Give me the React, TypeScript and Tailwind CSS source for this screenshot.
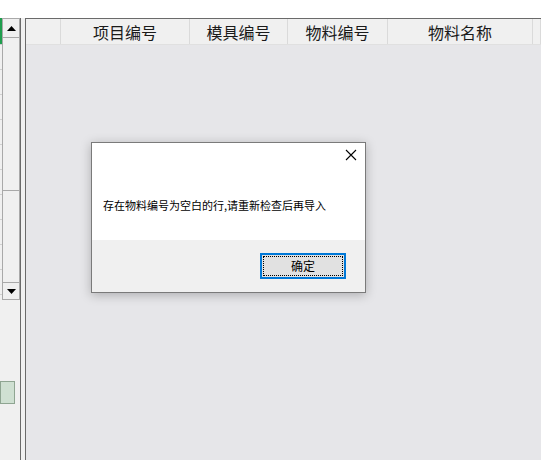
import React from "react";

const cjk = { fontFamily: '"Noto Sans CJK SC", "Noto Sans", sans-serif' };

function Ticks() {
  const cells = Array.from({ length: 12 });
  return (
    <div className="flex h-[282px] w-[2px] flex-col overflow-hidden">
      {cells.map((_, i) => (
        <div
          key={i}
          className={
            i === 0
              ? "h-[26px] shrink-0 bg-[#1f9d4d]"
              : "h-[25px] shrink-0 border-t border-[#d0d0d0]"
          }
        />
      ))}
    </div>
  );
}

function Scrollbar() {
  return (
    <div className="flex w-[18px] flex-col">
      <div className="flex h-[265px] flex-col border border-[#a9a9a9] bg-[#f0f0f0]">
        <div className="flex h-[19px] shrink-0 items-center justify-center border-b border-[#a9a9a9]">
          <svg width="9" height="5" viewBox="0 0 9 5">
            <path d="M0 5 L4.5 0 L9 5 Z" fill="#000" />
          </svg>
        </div>
        <div className="h-[153px] shrink-0 border-b border-[#a9a9a9] bg-[#f0f0f0]" />
        <div className="flex-1" />
      </div>
      <div className="flex h-[17px] shrink-0 items-center justify-center border border-t-0 border-[#a9a9a9] bg-[#f0f0f0]">
        <svg width="9" height="5" viewBox="0 0 9 5">
          <path d="M0 0 L9 0 L4.5 5 Z" fill="#000" />
        </svg>
      </div>
    </div>
  );
}

export default function App() {
  const cols: [number, string][] = [
    [35, ""],
    [129, "项目编号"],
    [98, "模具编号"],
    [100, "物料编号"],
    [145, "物料名称"],
    [8, ""],
  ];
  return (
    <div className="relative flex h-[460px] w-[541px] flex-col overflow-hidden bg-white" style={cjk}>
      <div className="h-[18px] shrink-0 bg-white" />
      <div className="flex flex-1">
        {/* left strip */}
        <div className="flex w-[20px] shrink-0 flex-col bg-[#f0f0f0]">
          <div className="flex">
            <Ticks />
            <Scrollbar />
          </div>
          <div className="mt-[81px] h-[23px] w-[15px] border border-[#8fa592] bg-[#cfe0d2]" />
        </div>
        <div className="w-[1px] shrink-0 bg-[#6a6a6a]" />
        <div className="w-[4px] shrink-0 bg-[#f0f0f0]" />
        <div className="w-[1px] shrink-0 bg-[#6a6a6a]" />
        {/* main grid */}
        <div className="flex flex-1 flex-col bg-[#e6e6e9]">
          <div className="flex h-[26px] shrink-0 border-t border-[#6a6a6a] bg-[#f0f0f0]">
            {cols.map(([w, t], i) => (
              <div
                key={i}
                className="flex shrink-0 items-center justify-center border-r border-[#dadada] text-[16px] leading-none text-[#1a1a1a]"
                style={{ width: w }}
              >
                {t}
              </div>
            ))}
          </div>
          <div className="h-[1px] bg-[#e0e0e0]" />
        </div>
      </div>

      {/* dialog */}
      <div className="absolute left-[91px] top-[142px] flex h-[151px] w-[275px] flex-col border border-[#7a7a7a] bg-white shadow-[0_2px_10px_rgba(0,0,0,0.25)]">
        <div className="relative h-[97px] shrink-0 bg-white">
          <svg
            className="absolute right-[8px] top-[6px]"
            width="12"
            height="12"
            viewBox="0 0 12 12"
          >
            <path d="M1 1 L11 11 M11 1 L1 11" stroke="#000" strokeWidth="1.1" fill="none" />
          </svg>
          <div className="pl-[11px] pt-[54px] text-[11px] leading-[16px] text-black">
            存在物料编号为空白的行,请重新检查后再导入
          </div>
        </div>
        <div className="flex flex-1 justify-end bg-[#f0f0f0] pr-[19px] pt-[13px]">
          <div className="flex h-[26px] w-[86px] border-2 border-[#0078d7] bg-[#e1e1e1] p-[1px]">
            <div className="flex flex-1 items-center justify-center border border-dotted border-black text-[12px] leading-none text-black">
              确定
            </div>
          </div>
        </div>
      </div>
    </div>
  );
}
